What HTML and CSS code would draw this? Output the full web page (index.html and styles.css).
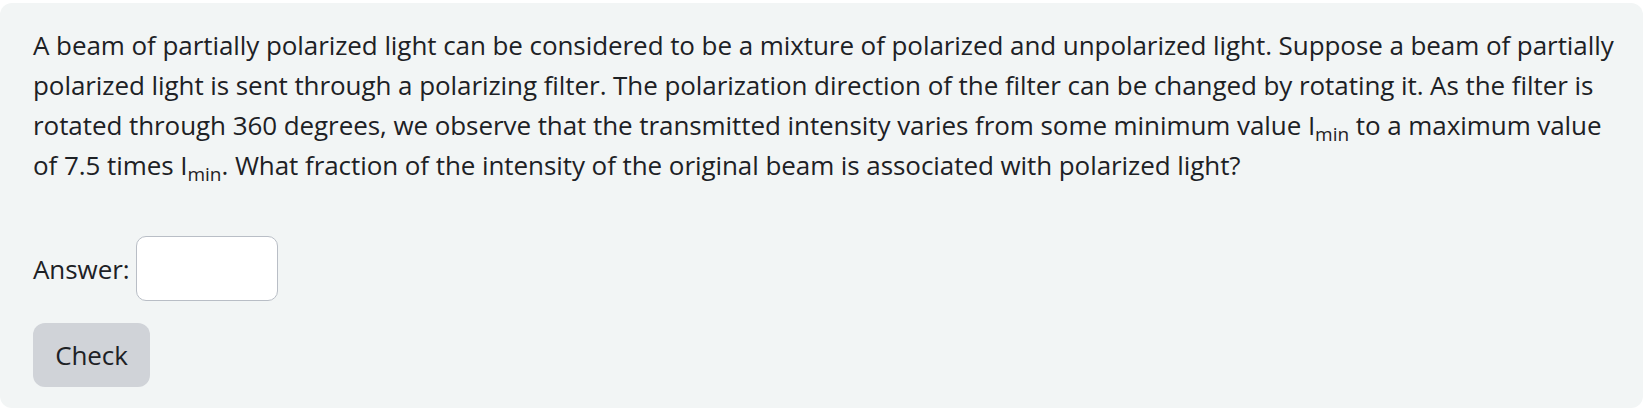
FILE: index.html
```html
<!DOCTYPE html>
<html>
<head>
<meta charset="utf-8">
<link rel="stylesheet" href="styles.css">
</head>
<body>
<div class="que">
  <p class="qtext">A beam of partially polarized light can be considered to be a mixture of polarized and unpolarized light. Suppose a beam of partially polarized light is sent through a polarizing filter. The polarization direction of the filter can be changed by rotating it. As the filter is rotated through 360 degrees, we observe that the transmitted intensity varies from some minimum value I<sub>min</sub> to a maximum value of 7.5 times I<sub>min</sub>. What fraction of the intensity of the original beam is associated with polarized light?</p>
  <div class="ablock">
    <label class="alabel" for="ans">Answer:</label>
    <input class="ainput" id="ans" type="text">
  </div>
  <button class="check" type="button">Check</button>
</div>
</body>
</html>
```
FILE: styles.css
```css
html, body {
  margin: 0;
  padding: 0;
  background: #ffffff;
}
body {
  padding-top: 3px;
  font-family: "Open Sans", "Noto Sans", sans-serif;
  color: #1d2125;
}
.que {
  width: 1643px;
  height: 405px;
  box-sizing: border-box;
  background: #f2f5f5;
  border-radius: 12px;
  padding: 22px 20px 0 33px;
}
.qtext {
  margin: 0;
  font-size: 26px;
  letter-spacing: -0.07px;
  line-height: 40px;
}
.qtext sub {
  font-size: 19px;
  letter-spacing: 0;
  line-height: 0;
  vertical-align: -6px;
}
.ablock {
  display: flex;
  align-items: center;
  gap: 6px;
  margin-top: 51px;
}
.alabel {
  font-size: 26px;
  letter-spacing: -0.07px;
  line-height: 40px;
}
.ainput {
  width: 142px;
  height: 65px;
  box-sizing: border-box;
  border: 1px solid #b9bec6;
  border-radius: 10px;
  background: #fff;
  margin: 0;
  padding: 0 12px;
}
.check {
  display: block;
  margin-top: 22px;
  width: 117px;
  height: 64px;
  border: 0;
  border-radius: 12px;
  background: #d0d3d8;
  color: #1d2125;
  font-family: "Open Sans", "Noto Sans", sans-serif;
  font-size: 26px;
  letter-spacing: -0.07px;
  padding: 0;
}
```
